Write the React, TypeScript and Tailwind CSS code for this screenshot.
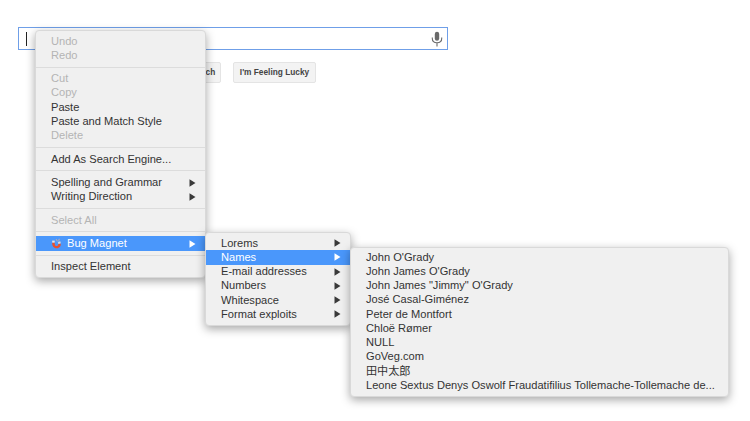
import React from "react";

type Item = { label?: string; dim?: boolean; sep?: boolean; sub?: boolean; active?: boolean; icon?: boolean };

const Arrow = ({ white }: { white?: boolean }) => (
  <svg width="7" height="8" viewBox="0 0 7 8" className="shrink-0">
    <path d="M0.5 0.3 L6.5 4 L0.5 7.7 Z" fill={white ? "#ffffff" : "#3a3a3a"} />
  </svg>
);

const Magnet = () => (
  <svg width="11" height="11" viewBox="0 0 11 11" className="mr-[5px] shrink-0">
    <path d="M1.2 4.5 C0.8 8 3 10.5 5.8 10.3 C8.6 10 10.3 7.6 9.6 5.4 L7.2 6.1 C7.5 7.2 6.8 8 5.7 8.1 C4.5 8.2 3.6 7 3.7 4.4 Z" fill="#e8502e" />
    <rect x="1.2" y="2.6" width="2.5" height="2" fill="#e9e4e0" />
    <rect x="7.1" y="3.6" width="2.5" height="2" transform="rotate(-16 8.3 4.6)" fill="#dcd8d8" />
    <path d="M5.2 1.2 L6.4 3.4 M8.2 0.8 L7.8 2.8" stroke="#f2b08f" strokeWidth="0.8" />
  </svg>
);

const main: Item[] = [
  { label: "Undo", dim: true },
  { label: "Redo", dim: true },
  { sep: true },
  { label: "Cut", dim: true },
  { label: "Copy", dim: true },
  { label: "Paste" },
  { label: "Paste and Match Style" },
  { label: "Delete", dim: true },
  { sep: true },
  { label: "Add As Search Engine..." },
  { sep: true },
  { label: "Spelling and Grammar", sub: true },
  { label: "Writing Direction", sub: true },
  { sep: true },
  { label: "Select All", dim: true },
  { sep: true },
  { label: "Bug Magnet", sub: true, active: true, icon: true },
  { sep: true },
  { label: "Inspect Element" },
];

const second: Item[] = [
  { label: "Lorems", sub: true },
  { label: "Names", sub: true, active: true },
  { label: "E-mail addresses", sub: true },
  { label: "Numbers", sub: true },
  { label: "Whitespace", sub: true },
  { label: "Format exploits", sub: true },
];

const third: Item[] = [
  { label: "John O'Grady" },
  { label: "John James O'Grady" },
  { label: "John James \"Jimmy\" O'Grady" },
  { label: "José Casal-Giménez" },
  { label: "Peter de Montfort" },
  { label: "Chloë Rømer" },
  { label: "NULL" },
  { label: "GoVeg.com" },
  { label: "田中太郎" },
  { label: "Leone Sextus Denys Oswolf Fraudatifilius Tollemache-Tollemache de..." },
];

function Rows({ items }: { items: Item[] }) {
  return (
    <>
      {items.map((it, i) =>
        it.sep ? (
          <div key={i} className="h-[9.15px] flex items-center">
            <div className="h-px w-full bg-[#dcdcdc]" />
          </div>
        ) : (
          <div
            key={i}
            className={`h-[14.25px] flex items-center justify-between pl-[15px] pr-[9px] ${
              it.active ? "bg-[#4a97fb] text-white" : it.dim ? "text-[#b4b4b4]" : "text-[#333333]"
            }`}
          >
            <span className="flex items-center whitespace-nowrap">
              {it.icon && <Magnet />}
              {it.label}
            </span>
            {it.sub && <Arrow white={it.active} />}
          </div>
        )
      )}
    </>
  );
}

const menuCls =
  "absolute bg-[#f0f0f0] rounded-[4px] border border-[#d9d9d9] shadow-[0_3px_10px_rgba(0,0,0,0.35)] text-[11.1px] leading-none";

export default function App() {
  return (
    <div
      className="relative w-[750px] h-[421px] bg-white overflow-hidden"
      style={{ fontFamily: '"Liberation Sans", "Noto Sans CJK JP", sans-serif' }}
    >
      <div className="pt-[27px] pl-[18px]">
        <div className="w-[430px] h-[23px] border border-[#6f9fe8] flex items-center justify-between pl-[7px] pr-[4px]">
          <div className="w-px h-[14px] bg-[#222222]" />
          <svg width="12" height="16" viewBox="0 0 12 16" fill="none">
            <rect x="3.8" y="0.8" width="4.4" height="9" rx="2.2" fill="#6a6a6a" />
            <path d="M1.3 6.5 V7.6 C1.3 10.2 3.3 11.8 6 11.8 C8.7 11.8 10.7 10.2 10.7 7.6 V6.5 M6 11.8 V15.5" stroke="#6a6a6a" strokeWidth="1.1" />
          </svg>
        </div>
        <div className="mt-[12px] pl-[133px] flex gap-[12px]">
          <div className="w-[70px] h-[21px] flex items-center justify-center rounded-[2px] border border-[#e4e4e4] bg-[#f3f3f3] text-[8.3px] font-bold text-[#444444] whitespace-nowrap">
            Google Search
          </div>
          <div className="w-[83px] h-[21px] flex items-center justify-center rounded-[2px] border border-[#e4e4e4] bg-[#f3f3f3] text-[8.3px] font-bold text-[#444444] whitespace-nowrap">
            I'm Feeling Lucky
          </div>
        </div>
      </div>

      <div className={`${menuCls} left-[35px] top-[30px] w-[171px] py-[3px]`}>
        <Rows items={main} />
      </div>
      <div className={`${menuCls} left-[205px] top-[232px] w-[146px] py-[3px]`}>
        <Rows items={second} />
      </div>
      <div className={`${menuCls} left-[350px] top-[247px] w-[379px] pt-[2px] pb-[3px]`}>
        <Rows items={third} />
      </div>
    </div>
  );
}
